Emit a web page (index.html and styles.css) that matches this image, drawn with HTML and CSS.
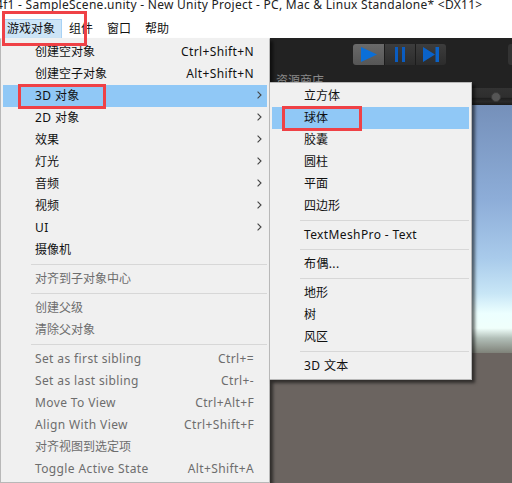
FILE: index.html
```html
<!DOCTYPE html>
<html lang="en">

<head>
    <meta charset="UTF-8">
    <title>Unity Editor - GameObject menu</title>
    <link rel="stylesheet" href="styles.css">
</head>

<body>
    <div class="title-bar">4f1 - SampleScene.unity - New Unity Project - PC, Mac &amp; Linux Standalone* &lt;DX11&gt;</div>
    <div class="menu-bar">
        <span class="menu-label active">游戏对象</span>
        <span class="menu-label">组件</span>
        <span class="menu-label">窗口</span>
        <span class="menu-label">帮助</span>
    </div>

    <div class="editor">
        <div class="toolbar">
            <div class="play-group">
                <div class="play-btn on">
                    <svg width="16" height="15" viewBox="0 0 16 15"><path d="M0 0L16 7.5L0 15Z" fill="#0a6fd8" /></svg>
                </div>
                <div class="play-btn">
                    <svg width="10" height="15" viewBox="0 0 10 15"><path d="M0 0H3V15H0ZM7 0H10V15H7Z" fill="#0a5cc0" /></svg>
                </div>
                <div class="play-btn">
                    <svg width="16" height="15" viewBox="0 0 16 15"><path d="M0 0L12 7.5L0 15ZM12.5 0H16V15H12.5Z" fill="#0a62c8" /></svg>
                </div>
            </div>
            <div class="stub"></div>
        </div>
        <div class="tab-row"><span class="tab">资源商店</span></div>
        <div class="slider-row"><span class="knob"></span></div>
        <div class="scene"></div>
        <div class="ground"></div>
    </div>

    <div class="menu main-menu">
        <div class="item"><span class="zh">创建空对象</span><span class="keys">Ctrl+Shift+N</span></div>
        <div class="item"><span class="zh">创建空子对象</span><span class="keys">Alt+Shift+N</span></div>
        <div class="item hot"><span>3D 对象</span><svg class="arrow" width="5" height="8" viewBox="0 0 5 8"><path d="M.6.6L4 4L.6 7.4" /></svg></div>
        <div class="item"><span>2D 对象</span><svg class="arrow" width="5" height="8" viewBox="0 0 5 8"><path d="M.6.6L4 4L.6 7.4" /></svg></div>
        <div class="item"><span class="zh">效果</span><svg class="arrow" width="5" height="8" viewBox="0 0 5 8"><path d="M.6.6L4 4L.6 7.4" /></svg></div>
        <div class="item"><span class="zh">灯光</span><svg class="arrow" width="5" height="8" viewBox="0 0 5 8"><path d="M.6.6L4 4L.6 7.4" /></svg></div>
        <div class="item"><span class="zh">音频</span><svg class="arrow" width="5" height="8" viewBox="0 0 5 8"><path d="M.6.6L4 4L.6 7.4" /></svg></div>
        <div class="item"><span class="zh">视频</span><svg class="arrow" width="5" height="8" viewBox="0 0 5 8"><path d="M.6.6L4 4L.6 7.4" /></svg></div>
        <div class="item"><span>UI</span><svg class="arrow" width="5" height="8" viewBox="0 0 5 8"><path d="M.6.6L4 4L.6 7.4" /></svg></div>
        <div class="item"><span class="zh">摄像机</span></div>
        <div class="sep"></div>
        <div class="item off"><span class="zh">对齐到子对象中心</span></div>
        <div class="sep"></div>
        <div class="item off"><span class="zh">创建父级</span></div>
        <div class="item off"><span class="zh">清除父对象</span></div>
        <div class="sep"></div>
        <div class="item off"><span>Set as first sibling</span><span class="keys">Ctrl+=</span></div>
        <div class="item off"><span>Set as last sibling</span><span class="keys">Ctrl+-</span></div>
        <div class="item off"><span>Move To View</span><span class="keys">Ctrl+Alt+F</span></div>
        <div class="item off"><span>Align With View</span><span class="keys">Ctrl+Shift+F</span></div>
        <div class="item off"><span class="zh">对齐视图到选定项</span></div>
        <div class="item off"><span>Toggle Active State</span><span class="keys">Alt+Shift+A</span></div>
    </div>

    <div class="menu sub-menu">
        <div class="item"><span class="zh">立方体</span></div>
        <div class="item hot"><span class="zh">球体</span></div>
        <div class="item"><span class="zh">胶囊</span></div>
        <div class="item"><span class="zh">圆柱</span></div>
        <div class="item"><span class="zh">平面</span></div>
        <div class="item"><span class="zh">四边形</span></div>
        <div class="sep"></div>
        <div class="item"><span>TextMeshPro - Text</span></div>
        <div class="sep"></div>
        <div class="item"><span>布偶...</span></div>
        <div class="sep"></div>
        <div class="item"><span class="zh">地形</span></div>
        <div class="item"><span class="zh">树</span></div>
        <div class="item"><span class="zh">风区</span></div>
        <div class="sep"></div>
        <div class="item"><span>3D 文本</span></div>
    </div>

    <!-- red annotation boxes -->
    <div class="mark mark-menu"></div>
    <div class="mark mark-3d"></div>
    <div class="mark mark-sphere"></div>
</body>

</html>
```

FILE: styles.css
```css
html, body {
    margin: 0;
    height: 100%;
}

body {
    position: relative;
    display: flex;
    flex-direction: column;
    width: 512px;
    height: 483px;
    overflow: hidden;
    background: white;
    font-family: "Noto Sans", "Noto Sans CJK SC", sans-serif;
    font-size: 12px;
    letter-spacing: 0.38px;
    color: #111;
}

.title-bar {
    height: 15px;
    margin-left: -4px;
    line-height: 10px;
    white-space: nowrap;
    letter-spacing: 0.27px;
    color: #222;
}

.menu-bar {
    display: flex;
    height: 23px;
    padding: 4px 0 0 4px;
    box-sizing: border-box;
    letter-spacing: 0;
}

.menu-label {
    height: 18px;
    line-height: 17px;
    padding: 0 6px;
    border: 1px solid transparent;
}

.menu-label.active {
    padding: 0 6px 0 2px;
    background: #cce4f7;
    border-color: #a8d2f5;
}

.editor {
    flex: 1;
    display: flex;
    flex-direction: column;
    background: #6b6460;
}

.toolbar {
    height: 35px;
    background: #222;
    display: flex;
    align-items: flex-start;
    padding: 6px 0 0 353px;
    box-sizing: border-box;
}

.play-group {
    display: flex;
    height: 21px;
    border-radius: 3px;
    overflow: hidden;
}

.play-btn {
    width: 31px;
    display: flex;
    align-items: center;
    justify-content: center;
    background: linear-gradient(#3d3d3d, #2c2c2c);
    border-left: 1px solid #1c1c1c;
    box-sizing: border-box;
}

.play-btn.on {
    background: linear-gradient(#6a6a6a, #565656);
    border-left: 0;
}

.stub {
    width: 4px;
    height: 21px;
    margin-left: 62px;
    background: #333;
    border-radius: 3px 0 0 3px;
}

.tab-row {
    height: 15px;
    background: #222;
    padding-left: 276px;
    overflow: hidden;
    letter-spacing: 0;
}

.tab {
    display: block;
    line-height: 16px;
    color: #8a8a8a;
}

.slider-row {
    position: relative;
    height: 17px;
    background: linear-gradient(#333, #2e2e2e 55%, #1e1e1e 60%, #2a2a2a 80%, #1a1a1a);
}

.knob {
    position: absolute;
    right: 11px;
    top: 4px;
    width: 8px;
    height: 8px;
    border-radius: 50%;
    background: #555;
    border: 1px solid #3a3a3a;
}

.scene {
    height: 248px;
    background: linear-gradient(#7590ba, #8dadd8 38%, #a9cbeb 62%, #c8e6f6 76%, #ecffff 84%, #f0fffb 90%, #b2bfb8 94%, #7f8279 100%);
}

.ground {
    flex: 1;
    background: #6b6460;
}

.menu {
    position: absolute;
    box-sizing: border-box;
    background: #f0f0f0;
    border: 1px solid #b8b8b8;
    box-shadow: 3px 3px 3px rgba(0, 0, 0, 0.55);
    padding: 2px;
}

.main-menu {
    left: 0;
    top: 38px;
    width: 270px;
    height: 445px;
    border-top-color: #f0f0f0;
}

.sub-menu {
    left: 269px;
    top: 82px;
    width: 203px;
    height: 298px;
}

.item {
    display: flex;
    align-items: center;
    justify-content: space-between;
    height: 22px;
    padding: 0 13px 2px 32px;
    box-sizing: border-box;
    white-space: nowrap;
}

.zh {
    letter-spacing: 0;
}

.item.hot {
    background: #90c8f6;
}

.item.off {
    color: #6d6d6d;
}

.sep {
    height: 1px;
    margin: 3px 0 3px 28px;
    background: #d7d7d7;
}

.arrow {
    margin-right: -8px;
    fill: none;
    stroke: #444;
    stroke-width: 1.1;
}

.mark {
    position: absolute;
    box-sizing: border-box;
    border: 3px solid #ef4146;
}

.mark-menu {
    left: 2px;
    top: 11px;
    width: 85px;
    height: 35px;
}

.mark-3d {
    left: 18px;
    top: 84px;
    width: 88px;
    height: 25px;
}

.mark-sphere {
    left: 282px;
    top: 106px;
    width: 80px;
    height: 25px;
}
```
